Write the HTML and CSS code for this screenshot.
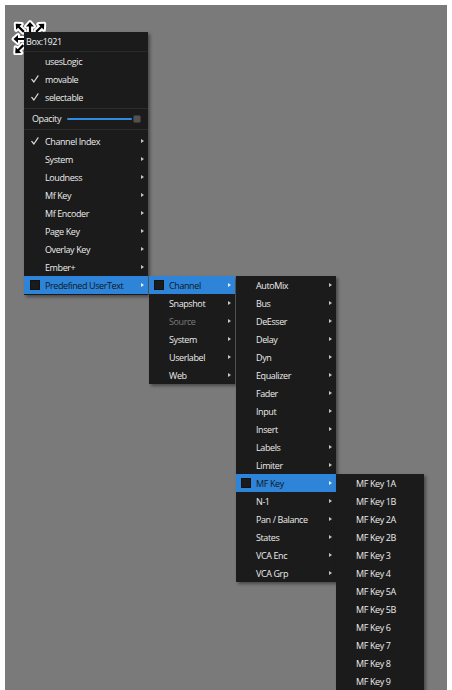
FILE: index.html
```html
<!DOCTYPE html>
<html>
<head>
<meta charset="utf-8">
<title>Context menu</title>
<link rel="stylesheet" href="styles.css">
</head>
<body>
<div class="canvas">
  <svg class="handles" width="50" height="50" viewBox="0 0 50 50">
    <defs>
      <path id="arr" d="M0,-6 L4,-1.5 L1.1,-1.5 L1.1,5.5 L-1.1,5.5 L-1.1,-1.5 L-4,-1.5 Z"/>
    </defs>
    <g class="h-outline">
      <use href="#arr" transform="translate(15,23) rotate(-45)"/>
      <use href="#arr" transform="translate(25,23)"/>
      <use href="#arr" transform="translate(35,23) rotate(45)"/>
      <use href="#arr" transform="translate(14.5,34) rotate(-90)"/>
      <use href="#arr" transform="translate(14.5,44) rotate(-135)"/>
    </g>
    <g class="h-fill">
      <use href="#arr" transform="translate(15,23) rotate(-45)"/>
      <use href="#arr" transform="translate(25,23)"/>
      <use href="#arr" transform="translate(35,23) rotate(45)"/>
      <use href="#arr" transform="translate(14.5,34) rotate(-90)"/>
      <use href="#arr" transform="translate(14.5,44) rotate(-135)"/>
    </g>
  </svg>

  <div class="menu m1">
    <div class="title">Box:1921</div>
    <div class="item"><span class="mark"></span><span class="label">usesLogic</span><span class="nosub"></span></div>
    <div class="item"><span class="mark"><svg class="check" width="8" height="8" viewBox="0 0 8 8"><path d="M0.8,4.4 L2.9,7 L7,0.8"/></svg></span><span class="label">movable</span><span class="nosub"></span></div>
    <div class="item"><span class="mark"><svg class="check" width="8" height="8" viewBox="0 0 8 8"><path d="M0.8,4.4 L2.9,7 L7,0.8"/></svg></span><span class="label">selectable</span><span class="nosub"></span></div>
    <div class="sep"></div>
    <div class="opacity">
      <span class="op-label">Opacity</span>
      <span class="slider"><span class="track"></span><span class="thumb"></span></span>
    </div>
    <div class="sep sep-b"></div>
    <div class="item"><span class="mark"><svg class="check" width="8" height="8" viewBox="0 0 8 8"><path d="M0.8,4.4 L2.9,7 L7,0.8"/></svg></span><span class="label">Channel Index</span><span class="sub"></span></div>
    <div class="item"><span class="mark"></span><span class="label">System</span><span class="sub"></span></div>
    <div class="item"><span class="mark"></span><span class="label">Loudness</span><span class="sub"></span></div>
    <div class="item"><span class="mark"></span><span class="label">Mf Key</span><span class="sub"></span></div>
    <div class="item"><span class="mark"></span><span class="label">Mf Encoder</span><span class="sub"></span></div>
    <div class="item"><span class="mark"></span><span class="label">Page Key</span><span class="sub"></span></div>
    <div class="item"><span class="mark"></span><span class="label">Overlay Key</span><span class="sub"></span></div>
    <div class="item"><span class="mark"></span><span class="label">Ember+</span><span class="sub"></span></div>
    <div class="item active"><span class="mark"><span class="box"></span></span><span class="label">Predefined UserText</span><span class="sub"></span></div>
  </div>

  <div class="menu m2">
    <div class="item active"><span class="mark"><span class="box"></span></span><span class="label">Channel</span><span class="sub"></span></div>
    <div class="item"><span class="mark"></span><span class="label">Snapshot</span><span class="sub"></span></div>
    <div class="item disabled"><span class="mark"></span><span class="label">Source</span><span class="sub"></span></div>
    <div class="item"><span class="mark"></span><span class="label">System</span><span class="sub"></span></div>
    <div class="item"><span class="mark"></span><span class="label">Userlabel</span><span class="sub"></span></div>
    <div class="item"><span class="mark"></span><span class="label">Web</span><span class="sub"></span></div>
  </div>

  <div class="menu m3">
    <div class="item"><span class="mark"></span><span class="label">AutoMix</span><span class="sub"></span></div>
    <div class="item"><span class="mark"></span><span class="label">Bus</span><span class="sub"></span></div>
    <div class="item"><span class="mark"></span><span class="label">DeEsser</span><span class="sub"></span></div>
    <div class="item"><span class="mark"></span><span class="label">Delay</span><span class="sub"></span></div>
    <div class="item"><span class="mark"></span><span class="label">Dyn</span><span class="sub"></span></div>
    <div class="item"><span class="mark"></span><span class="label">Equalizer</span><span class="sub"></span></div>
    <div class="item"><span class="mark"></span><span class="label">Fader</span><span class="sub"></span></div>
    <div class="item"><span class="mark"></span><span class="label">Input</span><span class="sub"></span></div>
    <div class="item"><span class="mark"></span><span class="label">Insert</span><span class="sub"></span></div>
    <div class="item"><span class="mark"></span><span class="label">Labels</span><span class="sub"></span></div>
    <div class="item"><span class="mark"></span><span class="label">Limiter</span><span class="sub"></span></div>
    <div class="item active"><span class="mark"><span class="box"></span></span><span class="label">MF Key</span><span class="sub"></span></div>
    <div class="item"><span class="mark"></span><span class="label">N-1</span><span class="sub"></span></div>
    <div class="item"><span class="mark"></span><span class="label">Pan / Balance</span><span class="sub"></span></div>
    <div class="item"><span class="mark"></span><span class="label">States</span><span class="sub"></span></div>
    <div class="item"><span class="mark"></span><span class="label">VCA Enc</span><span class="sub"></span></div>
    <div class="item"><span class="mark"></span><span class="label">VCA Grp</span><span class="sub"></span></div>
  </div>

  <div class="menu m4">
    <div class="item"><span class="mark"></span><span class="label">MF Key 1A</span></div>
    <div class="item"><span class="mark"></span><span class="label">MF Key 1B</span></div>
    <div class="item"><span class="mark"></span><span class="label">MF Key 2A</span></div>
    <div class="item"><span class="mark"></span><span class="label">MF Key 2B</span></div>
    <div class="item"><span class="mark"></span><span class="label">MF Key 3</span></div>
    <div class="item"><span class="mark"></span><span class="label">MF Key 4</span></div>
    <div class="item"><span class="mark"></span><span class="label">MF Key 5A</span></div>
    <div class="item"><span class="mark"></span><span class="label">MF Key 5B</span></div>
    <div class="item"><span class="mark"></span><span class="label">MF Key 6</span></div>
    <div class="item"><span class="mark"></span><span class="label">MF Key 7</span></div>
    <div class="item"><span class="mark"></span><span class="label">MF Key 8</span></div>
    <div class="item"><span class="mark"></span><span class="label">MF Key 9</span></div>
  </div>
</div>
</body>
</html>
```

FILE: styles.css
```css
* { box-sizing: border-box; }

html, body {
  margin: 0;
  padding: 0;
  background: #ffffff;
}

body {
  font-family: "Open Sans", "Noto Sans", sans-serif;
  font-size: 9px;
  letter-spacing: -0.4px;
}

.canvas {
  position: relative;
  margin: 5px 0 0 5px;
  width: 442px;
  height: 685px;
  background: #7a7a7a;
  overflow: hidden;
}

.handles {
  position: absolute;
  left: 0;
  top: 0;
}

.h-outline use {
  fill: #ffffff;
  stroke: #ffffff;
  stroke-width: 4;
  stroke-linejoin: round;
}

.h-fill use {
  fill: #000000;
}

.menu {
  position: absolute;
  display: flex;
  flex-direction: column;
  background: #1b1b1b;
  color: #ececec;
  box-shadow: 2px 2px 3px rgba(0, 0, 0, 0.4);
}

.m1 { left: 19px; top: 27px; width: 124px; padding-bottom: 1px; z-index: 1; }
.m2 { left: 144px; top: 271px; width: 86px; z-index: 2; }
.m3 { left: 231px; top: 271px; width: 100px; z-index: 3; }
.m4 { left: 331px; top: 469px; width: 88px; z-index: 4; }

.title {
  height: 20px;
  line-height: 19px;
  padding-left: 2px;
  border-bottom: 1px solid #2a2a2a;
  color: #eef3f9;
}

.item {
  display: flex;
  align-items: center;
  height: 18px;
  white-space: nowrap;
}

.mark {
  width: 21px;
  flex: none;
  display: flex;
  justify-content: center;
  align-items: center;
}

.m2 .mark, .m3 .mark, .m4 .mark { width: 20px; }

.label { flex: 1; }

.sub, .nosub {
  width: 12px;
  flex: none;
  display: flex;
  justify-content: center;
  align-items: center;
}

.sub::before {
  content: "";
  border-left: 3px solid #c6c6c6;
  border-top: 2.5px solid transparent;
  border-bottom: 2.5px solid transparent;
}

.check path {
  fill: none;
  stroke: #dcdcdc;
  stroke-width: 1.2;
  stroke-linecap: round;
  stroke-linejoin: round;
}

.item.active {
  background: #2d84d8;
  color: #111820;
}

.item.active .sub::before { border-left-color: #e8eef6; }

.item.disabled { color: #7b7b7b; }

.box {
  width: 10px;
  height: 10px;
  background: #1b1b1b;
  border: 1px solid #121212;
}

.sep {
  height: 1px;
  margin: 2px 0 1px;
  background: #2c2c2c;
}

.sep-b { margin: 2px 0 2px; }

.opacity {
  display: flex;
  align-items: center;
  height: 17px;
  padding: 0 7px 0 8px;
  gap: 6px;
}

.slider {
  flex: 1;
  display: flex;
  align-items: center;
  gap: 1px;
}

.track {
  flex: 1;
  height: 2px;
  background: #2f8ae0;
  border-radius: 1px;
}

.thumb {
  width: 8px;
  height: 8px;
  background: #525252;
  border: 1px solid #3a3a3a;
  border-radius: 2px;
}
```
